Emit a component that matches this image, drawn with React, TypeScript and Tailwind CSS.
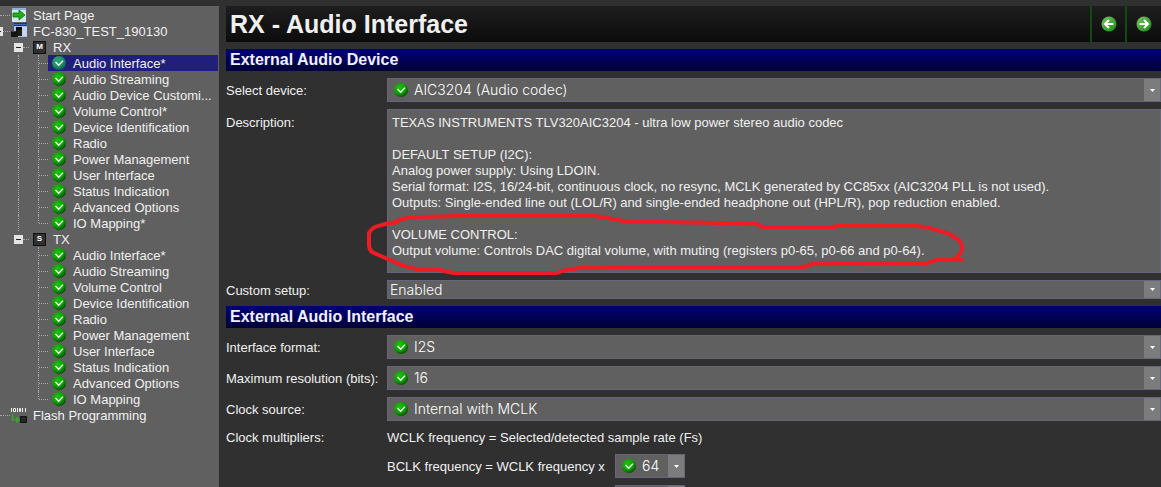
import { useState } from "react";
import type { ReactNode } from "react";

interface TreeBranchProps {
  letter: string;
  title: string;
  items: string[];
  trunk?: boolean;
  selected?: string;
  onSelect: (item: string) => void;
}

interface DeviceSelectProps {
  id: string;
  options: string[];
  checked?: boolean;
  label?: string;
}

const rxItems = [
  "Audio Interface*",
  "Audio Streaming",
  "Audio Device Customi...",
  "Volume Control*",
  "Device Identification",
  "Radio",
  "Power Management",
  "User Interface",
  "Status Indication",
  "Advanced Options",
  "IO Mapping*",
];

const txItems = [
  "Audio Interface*",
  "Audio Streaming",
  "Volume Control",
  "Device Identification",
  "Radio",
  "Power Management",
  "User Interface",
  "Status Indication",
  "Advanced Options",
  "IO Mapping",
];

const description = `TEXAS INSTRUMENTS TLV320AIC3204 - ultra low power stereo audio codec

DEFAULT SETUP (I2C):
Analog power supply: Using LDOIN.
Serial format: I2S, 16/24-bit, continuous clock, no resync, MCLK generated by CC85xx (AIC3204 PLL is not used).
Outputs: Single-ended line out (LOL/R) and single-ended headphone out (HPL/R), pop reduction enabled.

VOLUME CONTROL:
Output volume: Controls DAC digital volume, with muting (registers p0-65, p0-66 and p0-64).`;

function CheckIcon({ active = false }: { active?: boolean }) {
  const id = active ? "ball-active" : "ball";
  return (
    <svg viewBox="0 0 14 14" className="h-3.5 w-3.5 shrink-0" aria-hidden="true">
      <defs>
        <radialGradient id={id} cx="0.4" cy="0.35" r="0.7">
          <stop offset="0" stopColor={active ? "#2fa678" : "#1fc40e"} />
          <stop offset="0.6" stopColor={active ? "#218a68" : "#109c08"} />
          <stop offset="1" stopColor={active ? "#104c66" : "#034403"} />
        </radialGradient>
      </defs>
      <circle cx="7" cy="7" r="7" fill={`url(#${id})`} />
      <path d="M3.5 6 6.700 9.200 11 4.600" fill="none" stroke="#f0fff0" strokeWidth="1.300" />
    </svg>
  );
}

function StartIcon() {
  return (
    <svg viewBox="0 0 14 14" className="h-3.5 w-3.5 shrink-0" aria-hidden="true">
      <rect width="14" height="14" fill="#d3e6ee" />
      <path d="M0 0h14v2H0z" fill="#8fb4dc" />
      <path d="M1 5h6V2l6 5-6 5V9H1z" fill="#22b014" stroke="#0a6c08" strokeWidth="0.8" />
    </svg>
  );
}

function ProjectIcon() {
  return (
    <svg viewBox="0 0 16 16" className="-ml-px h-4 w-4 shrink-0" aria-hidden="true">
      <path d="M3 0h13v14H3z" fill="#a9c0e8" />
      <path d="M3 0h13v3H3z" fill="#10358c" />
      <path d="M3 1.500h13" stroke="#5f8ada" strokeWidth="0.6" />
      <path d="M10 4h6v9h-6z" fill="#c6d6f0" />
      <path d="M5 4h6v4h-6z" fill="#0c0c0c" />
      <path d="M6 7h5v6H6z" fill="#1c1c1c" />
      <path d="M0 8h7v6H0z" fill="#141414" />
      <path d="M.5 8.500h4" stroke="#444" />
    </svg>
  );
}

function FlashIcon() {
  return (
    <svg viewBox="0 0 16 16" className="-ml-px h-4 w-4 shrink-0" aria-hidden="true">
      <path
        d="M.5 1v4M6.500 1v4M11.500 1v4M14.500 1v4M2.500 1.500h2v3h-2zM8.500 1.500h1v3h-1z"
        fill="none"
        stroke="#eee"
      />
      <path d="M1.500 7v6h4" fill="none" stroke="#2fae20" strokeWidth="1.600" />
      <path d="M5 9.500 9 13l-4 3z" fill="#2fae20" />
      <path d="M9.500 9.500h6v6h-6z" fill="#262626" stroke="#111" />
    </svg>
  );
}

function ArrowIcon({ back = false }: { back?: boolean }) {
  const id = back ? "nav-back" : "nav-next";
  return (
    <svg viewBox="0 0 16 16" className="h-4 w-4" aria-hidden="true">
      <defs>
        <linearGradient id={id} x1="0" y1="0" x2="1" y2="1">
          <stop offset="0" stopColor="#7cc468" />
          <stop offset="1" stopColor="#138a10" />
        </linearGradient>
      </defs>
      <circle cx="8" cy="8" r="7.500" fill={`url(#${id})`} />
      <path
        d={back ? "M12.500 8H4.500M8 4 4 8l4 4" : "M3.500 8h8M8 4l4 4-4 4"}
        fill="none"
        stroke="#fff"
        strokeWidth="2"
      />
    </svg>
  );
}

function Expander() {
  return (
    <svg viewBox="0 0 9 9" className="h-[9px] w-[9px] shrink-0" aria-hidden="true">
      <path d="M0 0h9v9H0z" fill="#e4e4e4" />
      <path d="M2 4.500h5" stroke="#222" />
    </svg>
  );
}

function Dots({ className }: { className: string }) {
  return <span className={`border-t border-dotted border-[#a8a8a8] ${className}`} />;
}

function RootRow({ icon, children }: { icon: ReactNode; children: ReactNode }) {
  return (
    <button type="button" className="flex h-4 w-full items-center text-left">
      <Dots className="w-2.5" />
      <span className="flex w-[23px] shrink-0 pl-0.5">{icon}</span>
      <span className="pt-0.5">{children}</span>
    </button>
  );
}

function TreeBranch({ letter, title, items, trunk = false, selected, onSelect }: TreeBranchProps) {
  return (
    <li>
      <button type="button" className="flex h-4 w-full items-center pl-3.5 text-left">
        <Expander />
        <Dots className="mr-1 w-1.5" />
        <span className="flex h-[13px] w-[13px] items-center justify-center border border-[#111] bg-[#303030] text-[8px] leading-none font-bold text-white">
          {letter}
        </span>
        <span className="pt-0.5 pl-[7px]">{title}</span>
      </button>
      <ul>
        {items.map((item, index) => (
          <li key={item} className="flex h-4 pl-[18px]">
            <span
              className={`w-5 shrink-0 ${trunk ? "border-l border-dotted border-[#a8a8a8]" : ""}`}
            />
            <span className="flex w-2.5 shrink-0 items-center">
              <span
                className={`w-px border-l border-dotted border-[#a8a8a8] ${
                  index === items.length - 1 ? "h-2 self-start" : "h-4"
                }`}
              />
              <Dots className="grow" />
            </span>
            <button
              type="button"
              onClick={() => onSelect(item)}
              className={`mr-px flex min-w-0 grow items-center gap-[7px] pl-1 text-left whitespace-nowrap ${
                item === selected ? "bg-[#20207c]" : ""
              }`}
            >
              <CheckIcon active={item === selected} />
              <span className="pt-0.5">{item}</span>
            </button>
          </li>
        ))}
      </ul>
    </li>
  );
}

function DeviceSelect({ id, options, checked = false, label }: DeviceSelectProps) {
  return (
    <div className={`relative ${checked ? "h-6" : "h-[19px]"}`}>
      <select
        id={id}
        aria-label={label}
        className={`h-full w-full appearance-none border border-[#66667a] bg-[#606060] pr-5 font-['Inter','Liberation_Sans',sans-serif] text-sm leading-4 font-light text-white outline-none ${
          checked ? "pl-[26px]" : "pl-0.5"
        }`}
      >
        {options.map((option) => (
          <option key={option}>{option}</option>
        ))}
      </select>
      {checked && (
        <span className="pointer-events-none absolute inset-y-0 left-[7px] flex items-center">
          <CheckIcon />
        </span>
      )}
      <span className="pointer-events-none absolute inset-y-px right-px flex w-4 items-center justify-center bg-[#7c7c7c]">
        <svg viewBox="0 0 5 3" className="h-[3px] w-[5px]" aria-hidden="true">
          <path d="M0 0h5L2.500 3z" fill="#fff" />
        </svg>
      </span>
    </div>
  );
}

function SectionTitle({ children }: { children: ReactNode }) {
  return (
    <h2 className="h-[22px] bg-linear-to-b from-[#000078] to-[#000038] pl-1 text-base leading-[22px] font-bold text-[#f0f0ff]">
      {children}
    </h2>
  );
}

function Field({ id, label, children }: { id: string; label: string; children: ReactNode }) {
  return (
    <div className="grid grid-cols-[161px_minmax(0,1fr)] items-center">
      <label htmlFor={id} className="pt-0.5">
        {label}
      </label>
      {children}
    </div>
  );
}

// Hand-drawn marker around the volume control lines
function Marker() {
  return (
    <svg
      viewBox="366 212 600 64"
      className="pointer-events-none absolute top-[103px] -left-[21px] h-16 w-[600px]"
      aria-hidden="true"
    >
      <path
        d="M393 223Q404 217 418 217L460 216H593Q605 217 612 219L630 222H660L723 223 757 224 762 227H833L837 226H917Q932 228 943 232 951 234 957 239 962 242 962 248 962 254 953 260M962 260H937L927 263 813 264 803 267H627L580 268Q567 269 557 273H453L440 270 417 269Q405 267 397 263L383 257 372 252Q369 249 369 245V233Q371 229 375 227 383 224 397 222"
        fill="none"
        stroke="#ee1c25"
        strokeWidth="4"
        strokeLinecap="round"
        strokeLinejoin="round"
      />
    </svg>
  );
}

export default function App() {
  const [selected, setSelected] = useState("RX/Audio Interface*");

  return (
    <div className="flex h-screen overflow-hidden bg-[#303030] pt-1.5 font-['Liberation_Sans',Arial,sans-serif] text-[13px] leading-4 text-[#f0f0f0]">
      <nav className="w-[219px] shrink-0 overflow-hidden bg-[#606060] pt-px">
        <ul>
          <li>
            <RootRow icon={<StartIcon />}>Start Page</RootRow>
          </li>
          <li className="relative">
            <RootRow icon={<ProjectIcon />}>FC-830_TEST_190130</RootRow>
            <span className="absolute top-1 -left-1.5">
              <Expander />
            </span>
            <ul>
              <TreeBranch
                letter="M"
                title="RX"
                items={rxItems}
                trunk
                selected={selected.startsWith("RX/") ? selected.slice(3) : undefined}
                onSelect={(item) => setSelected(`RX/${item}`)}
              />
              <TreeBranch
                letter="S"
                title="TX"
                items={txItems}
                selected={selected.startsWith("TX/") ? selected.slice(3) : undefined}
                onSelect={(item) => setSelected(`TX/${item}`)}
              />
            </ul>
          </li>
          <li>
            <RootRow icon={<FlashIcon />}>Flash Programming</RootRow>
          </li>
        </ul>
      </nav>

      <main className="flex min-w-0 grow flex-col gap-[7px] pl-[7px] *:shrink-0">
        <header className="flex h-9 items-center bg-linear-to-b from-[#1e1e1e] to-[#0c0c0c] pl-1">
          <h1 className="grow text-[25px] leading-9 font-bold">RX - Audio Interface</h1>
          <button
            type="button"
            aria-label="Previous page"
            className="flex h-9 w-[35px] items-center justify-center border-l-2 border-[#104c10]"
          >
            <ArrowIcon back />
          </button>
          <button
            type="button"
            aria-label="Next page"
            className="flex h-9 w-9 items-center justify-center border-l-2 border-[#104c10]"
          >
            <ArrowIcon />
          </button>
        </header>

        <SectionTitle>External Audio Device</SectionTitle>
        <Field id="device" label="Select device:">
          <DeviceSelect id="device" options={["AIC3204 (Audio codec)"]} checked />
        </Field>
        <div className="grid grid-cols-[161px_minmax(0,1fr)]">
          <label htmlFor="description" className="pt-1.5">
            Description:
          </label>
          <div className="relative">
            <textarea
              id="description"
              readOnly
              value={description}
              className="block h-41 w-full resize-none overflow-hidden border border-[#66667a] bg-[#606060] px-1 pt-[5px] outline-none"
            />
            <Marker />
          </div>
        </div>
        <Field id="setup" label="Custom setup:">
          <DeviceSelect id="setup" options={["Enabled", "Disabled"]} />
        </Field>

        <SectionTitle>External Audio Interface</SectionTitle>
        <Field id="format" label="Interface format:">
          <DeviceSelect id="format" options={["I2S"]} checked />
        </Field>
        <Field id="resolution" label="Maximum resolution (bits):">
          <DeviceSelect id="resolution" options={["16", "24"]} checked />
        </Field>
        <Field id="clock" label="Clock source:">
          <DeviceSelect id="clock" options={["Internal with MCLK"]} checked />
        </Field>
        <div className="grid grid-cols-[161px_minmax(0,1fr)] leading-[19px]">
          <span>Clock multipliers:</span>
          <div className="flex flex-col gap-[7px]">
            <p>WCLK frequency = Selected/detected sample rate (Fs)</p>
            <div className="flex items-center">
              <label htmlFor="bclk" className="w-57">
                BCLK frequency = WCLK frequency x
              </label>
              <div className="w-[70px]">
                <DeviceSelect id="bclk" options={["64", "128"]} checked />
              </div>
            </div>
            <div className="ml-57 w-[70px]">
              <DeviceSelect id="mclk" label="MCLK multiplier" options={["256"]} checked />
            </div>
          </div>
        </div>
      </main>
    </div>
  );
}
